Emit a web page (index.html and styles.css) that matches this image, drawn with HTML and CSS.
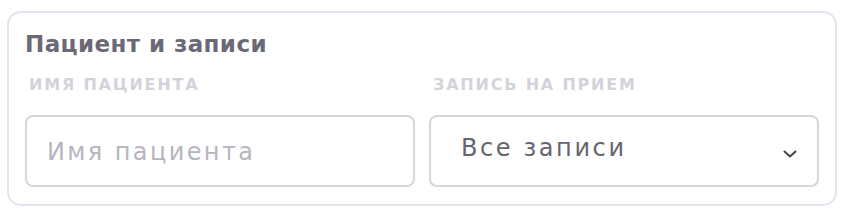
FILE: index.html
```html
<!DOCTYPE html>
<html lang="ru">
<head>
    <meta charset="UTF-8">
    <meta name="viewport" content="width=device-width, initial-scale=1.0">
    <title>Пациент и записи</title>
    <link rel="stylesheet" href="styles.css">
</head>
<body>
    <div class="filter-card">
        <div class="filter-title">Пациент и записи</div>

        <div class="filter-grid">
            <label class="filter-label" for="patient-name">Имя пациента</label>
            <label class="filter-label" for="appointment">Запись на прием</label>

            <input class="filter-input" id="patient-name" type="text" placeholder="Имя пациента">

            <div class="filter-select" id="appointment">
                <span class="select-value">Все записи</span>
                <svg class="select-arrow" width="14" height="8" viewBox="0 0 14 8">
                    <path d="M1.5 1.5 L7 6.5 L12.5 1.5" fill="none" stroke="#45444c" stroke-width="2" stroke-linecap="round" stroke-linejoin="round"/>
                </svg>
            </div>
        </div>
    </div>
</body>
</html>
```

FILE: styles.css
```css
body {
    font-family: "DejaVu Sans", sans-serif;
    background-color: #fff;
    margin: 0;
    padding: 0;
}

.filter-card {
    box-sizing: border-box;
    width: 830px;
    margin: 11px 0 0 7px;
    padding: 16px 16px 17px 16px;
    border: 2px solid #e3e6f0;
    border-radius: 14px;
}

.filter-title {
    font-size: 23px;
    font-weight: bold;
    letter-spacing: 0.4px;
    line-height: 30px;
    color: #6a6975;
}

.filter-grid {
    display: grid;
    grid-template-columns: 390px 390px;
    column-gap: 14px;
    margin-top: 17px;
}

.filter-label {
    font-size: 16px;
    font-weight: bold;
    letter-spacing: 1.8px;
    line-height: 18px;
    text-transform: uppercase;
    color: #d4d3d9;
    padding-left: 4px;
    margin-bottom: 21px;
}

.filter-input {
    box-sizing: border-box;
    height: 72px;
    margin: 0;
    padding: 2px 20px 0 20px;
    border: 2px solid #d7d6dd;
    border-radius: 8px;
    font-family: inherit;
    font-size: 24px;
    letter-spacing: 2.4px;
    color: #66656f;
    outline: none;
}

.filter-input::placeholder {
    color: #b6b5be;
}

.filter-select {
    box-sizing: border-box;
    height: 72px;
    display: flex;
    align-items: center;
    justify-content: space-between;
    padding: 0 20px 6px 30px;
    border: 2px solid #d7d6dd;
    border-radius: 8px;
}

.select-value {
    font-size: 24px;
    letter-spacing: 2.6px;
    color: #66656f;
}

.select-arrow {
    margin-top: 12px;
}
```
